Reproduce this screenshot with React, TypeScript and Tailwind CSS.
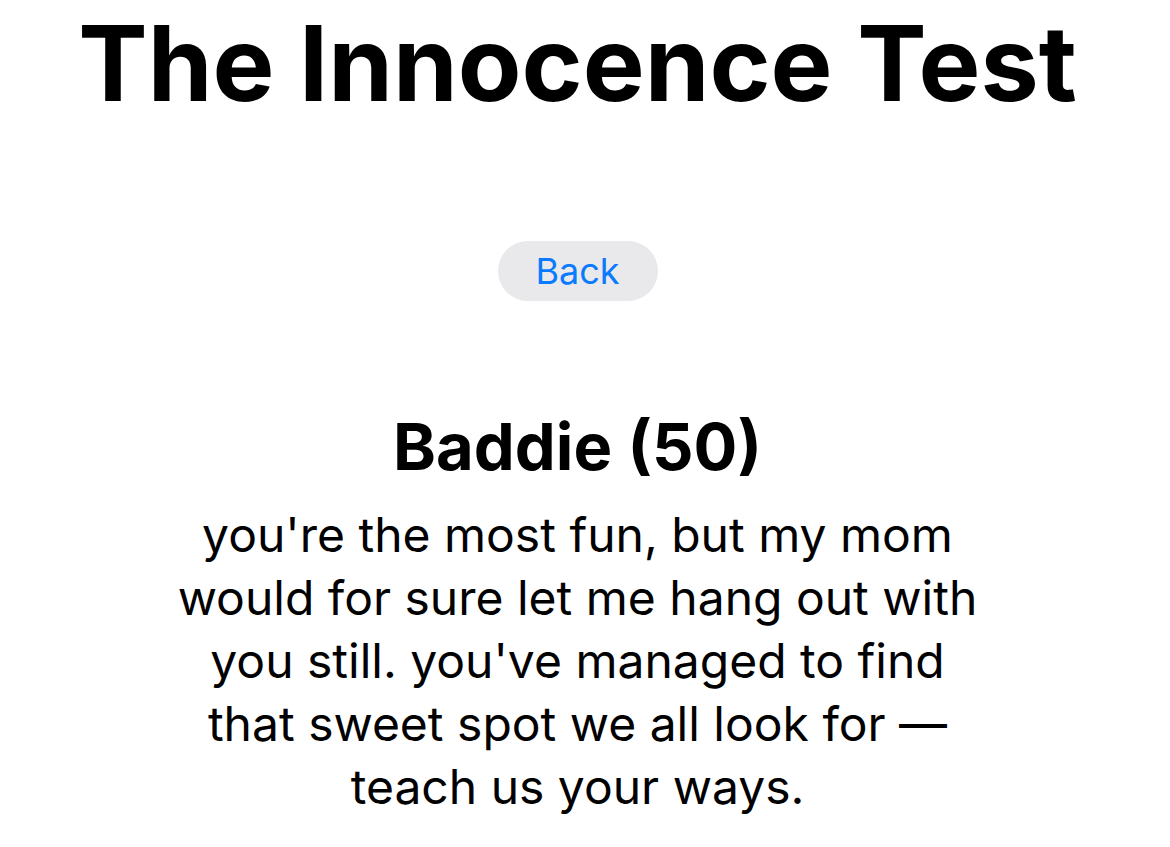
export default function App() {
  return (
    <div className="flex min-h-screen flex-col items-center bg-white pr-[15px] text-black" style={{ fontFamily: 'Inter, "Noto Sans", sans-serif' }}>
      {/* Title */}
      <h1 className="whitespace-nowrap text-[104px] font-bold leading-[126px]">The Innocence Test</h1>

      {/* Back */}
      <button className="mt-[115px] h-[60px] w-[160px] rounded-full bg-[#e9e9eb] text-[36px] text-[#0a7aff]">
        Back
      </button>

      {/* Result */}
      <section className="mt-[108px] flex w-[815px] flex-col items-center text-center">
        <h2 className="text-[65px] font-bold leading-[76px]">Baddie (50)</h2>
        <p className="mt-[18px] text-[48px] leading-[63px]">
          you're the most fun, but my mom would for sure let me hang out with you still. you've managed to find that
          sweet spot we all look for — teach us your ways.
        </p>
      </section>
    </div>
  );
}
